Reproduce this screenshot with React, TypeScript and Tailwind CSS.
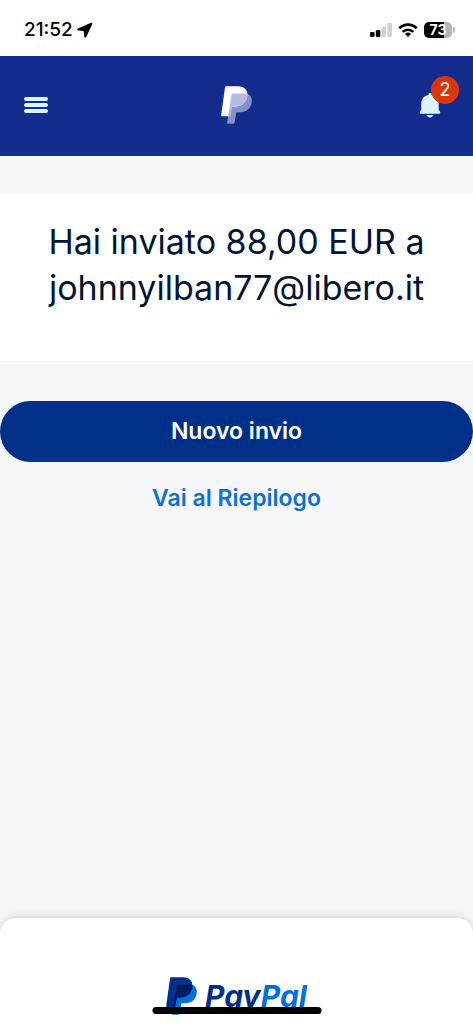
import React from 'react';

const LocationArrow: React.FC = () => (
  <svg viewBox="0 0 16 16" className="size-4" fill="#000" aria-hidden="true">
    <path d="M14.1.8.9 6.6c-1.1.5-.9 1.900.3 2l5 .4c.4 0 .6.2.6.6l.4 5c.1 1.200 1.600 1.400 2.100.3L15.200 2c.4-.9-.3-1.500-1.100-1.200Z" />
  </svg>
);

const StatusBar: React.FC = () => (
  <div className="flex h-14 items-center justify-between bg-white pt-1 pr-[18px] pl-6">
    <div className="flex items-center gap-1">
      <span className="text-[19px] font-medium text-black">21:52</span>
      <LocationArrow />
    </div>
    <div className="flex items-center gap-1.5">
      <svg viewBox="0 0 22 14" className="h-3.5 w-[22px]" aria-hidden="true">
        <rect x="0" y="9" width="4.5" height="5" rx="1.2" fill="#000" />
        <rect x="5.8" y="7" width="4.5" height="7" rx="1.2" fill="#000" />
        <rect x="11.6" y="3.5" width="4.5" height="10.5" rx="1.2" fill="#d2d2d2" />
        <rect x="17.4" y="0" width="4.5" height="14" rx="1.2" fill="#d2d2d2" />
      </svg>
      <svg viewBox="0 0 20 14" className="h-3.5 w-5" fill="none" stroke="#000" aria-hidden="true">
        <path d="M1.3 5.2a12.5 12.5 0 0 1 17.4 0" strokeWidth="2.7" />
        <path d="M4.7 8.9a7.6 7.6 0 0 1 10.6 0" strokeWidth="2.6" />
        <path d="M10 14 7 11a4.300 4.300 0 0 1 6 0Z" fill="#000" stroke="none" />
      </svg>
      <div className="flex items-center gap-px">
        <div className="flex h-4 w-7 items-center justify-center rounded-[5px] bg-linear-to-r from-black from-73% to-[#b5b5b5] to-73%">
          <span className="text-sm leading-4 font-bold text-white">73</span>
        </div>
        <span className="h-1.5 w-0.5 rounded-r-full bg-[#b5b5b5]" />
      </div>
    </div>
  </div>
);

interface MonogramProps {
  className: string;
  back: string;
  front: string;
  overlap: string;
}

const Monogram: React.FC<MonogramProps> = ({ className, back, front, overlap }) => (
  <svg viewBox="0 0 31 38" className={className} aria-hidden="true">
    <path
      d="M11.3 7.5h12c5.400 0 8.200 3.500 7.400 8.800-1 6.600-5.400 10-11.500 10h-2.700c-.8 0-1.300.5-1.400 1.200l-1.500 9c-.1.9-.7 1.300-1.500 1.300H7.200c-.8 0-1.200-.5-1.100-1.300Z"
      fill={front}
    />
    <path
      d="M5.200.3h12.100c6 0 9.900 3.800 9 9.700-1 6.700-5.800 10.500-12.200 10.500h-2.200c-.8 0-1.300.5-1.400 1.200L9.300 29c-.1.9-.7 1.300-1.500 1.300H1.300c-.8 0-1.200-.5-1.100-1.300L4 1.400C4.100.7 4.500.3 5.200.3Z"
      fill={back}
    />
    <path
      d="M12.300 7.500h11c1.100 0 2.100.1 3 .4v2.100c-1 6.700-5.800 10.500-12.200 10.500h-2.200c-.8 0-1.300.5-1.400 1.200L9.300 29c-.1.9-.7 1.300-1.500 1.300h-.7L10.600 9c.1-1 .8-1.500 1.700-1.500Z"
      fill={overlap}
    />
  </svg>
);

const Header: React.FC = () => (
  <header className="grid h-[100px] grid-cols-3 items-center bg-[#142c8e] px-6 pb-0.5">
    <button type="button" aria-label="Menu" className="flex w-6 flex-col gap-0.5">
      <span className="h-1 w-full rounded-full bg-[#d9f4ff]" />
      <span className="h-1 w-full rounded-full bg-[#d9f4ff]" />
      <span className="h-1 w-full rounded-full bg-[#d9f4ff]" />
    </button>
    <Monogram className="h-[38px] w-[31px] justify-self-center" back="#fff" front="#8490c8" overlap="#b5bbe0" />
    <button type="button" aria-label="Notifiche" className="relative mr-2 justify-self-end">
      <svg viewBox="0 0 22 26" className="h-[26px] w-[22px]" fill="#d9f4ff" aria-hidden="true">
        <path d="M11 1c-.9 0-1.500.6-1.500 1.500v.6C5 3.900 2.300 7.200 2.300 11.300v6L.9 20c-.5.9 0 1.700 1 1.700h18.200c1 0 1.500-.8 1-1.700l-1.400-2.700v-6c0-4.100-2.700-7.400-7.200-8.200v-.6C12.500 1.600 11.900 1 11 1Z" />
        <path d="M7.500 23h7c-.5 1.600-1.800 2.500-3.500 2.500S8 24.600 7.500 23Z" />
      </svg>
      <span className="absolute -top-4 left-3 flex size-7 items-center justify-center rounded-full bg-[#d9360b] text-lg text-white">
        2
      </span>
    </button>
  </header>
);

const Footer: React.FC = () => (
  <footer className="relative mt-auto flex h-[106px] justify-center rounded-t-2xl bg-white pt-[59px] shadow-[0_0_10px_rgba(0,0,0,0.16)]">
    <div className="flex h-[38px] items-center gap-2">
      <Monogram className="h-[38px] w-[31px]" back="#003087" front="#0070e0" overlap="#001c64" />
      <span className="text-[30px] leading-10 font-bold text-[#003087] italic [font-feature-settings:'cv11']">
        Pay<span className="text-[#0070e0]">Pal</span>
      </span>
    </div>
    <div className="absolute bottom-2.5 left-1/2 h-[7px] w-[169px] -translate-x-1/2 rounded-full bg-black" />
  </footer>
);

const App: React.FC = () => {
  return (
    <div className="flex min-h-screen flex-col bg-[#f4f6fa] font-[Inter,'Liberation_Sans',sans-serif]">
      <StatusBar />
      <Header />
      <main className="pt-[38px]">
        <section className="bg-white px-6 pt-[25px] pb-[50px]">
          <h1 className="text-center text-[34px] leading-[46px] text-[#001435]">
            Hai inviato 88,00 EUR a johnnyilban77@libero.it
          </h1>
        </section>
        <div className="mt-10 flex flex-col items-center gap-5">
          <button type="button" className="h-[61px] w-full rounded-full bg-[#003087] text-[23px] font-semibold text-white">
            Nuovo invio
          </button>
          <a href="#riepilogo" className="text-[23px] leading-8 font-semibold text-[#0f70d1]">
            Vai al Riepilogo
          </a>
        </div>
      </main>
      <Footer />
    </div>
  );
};

export default App;
